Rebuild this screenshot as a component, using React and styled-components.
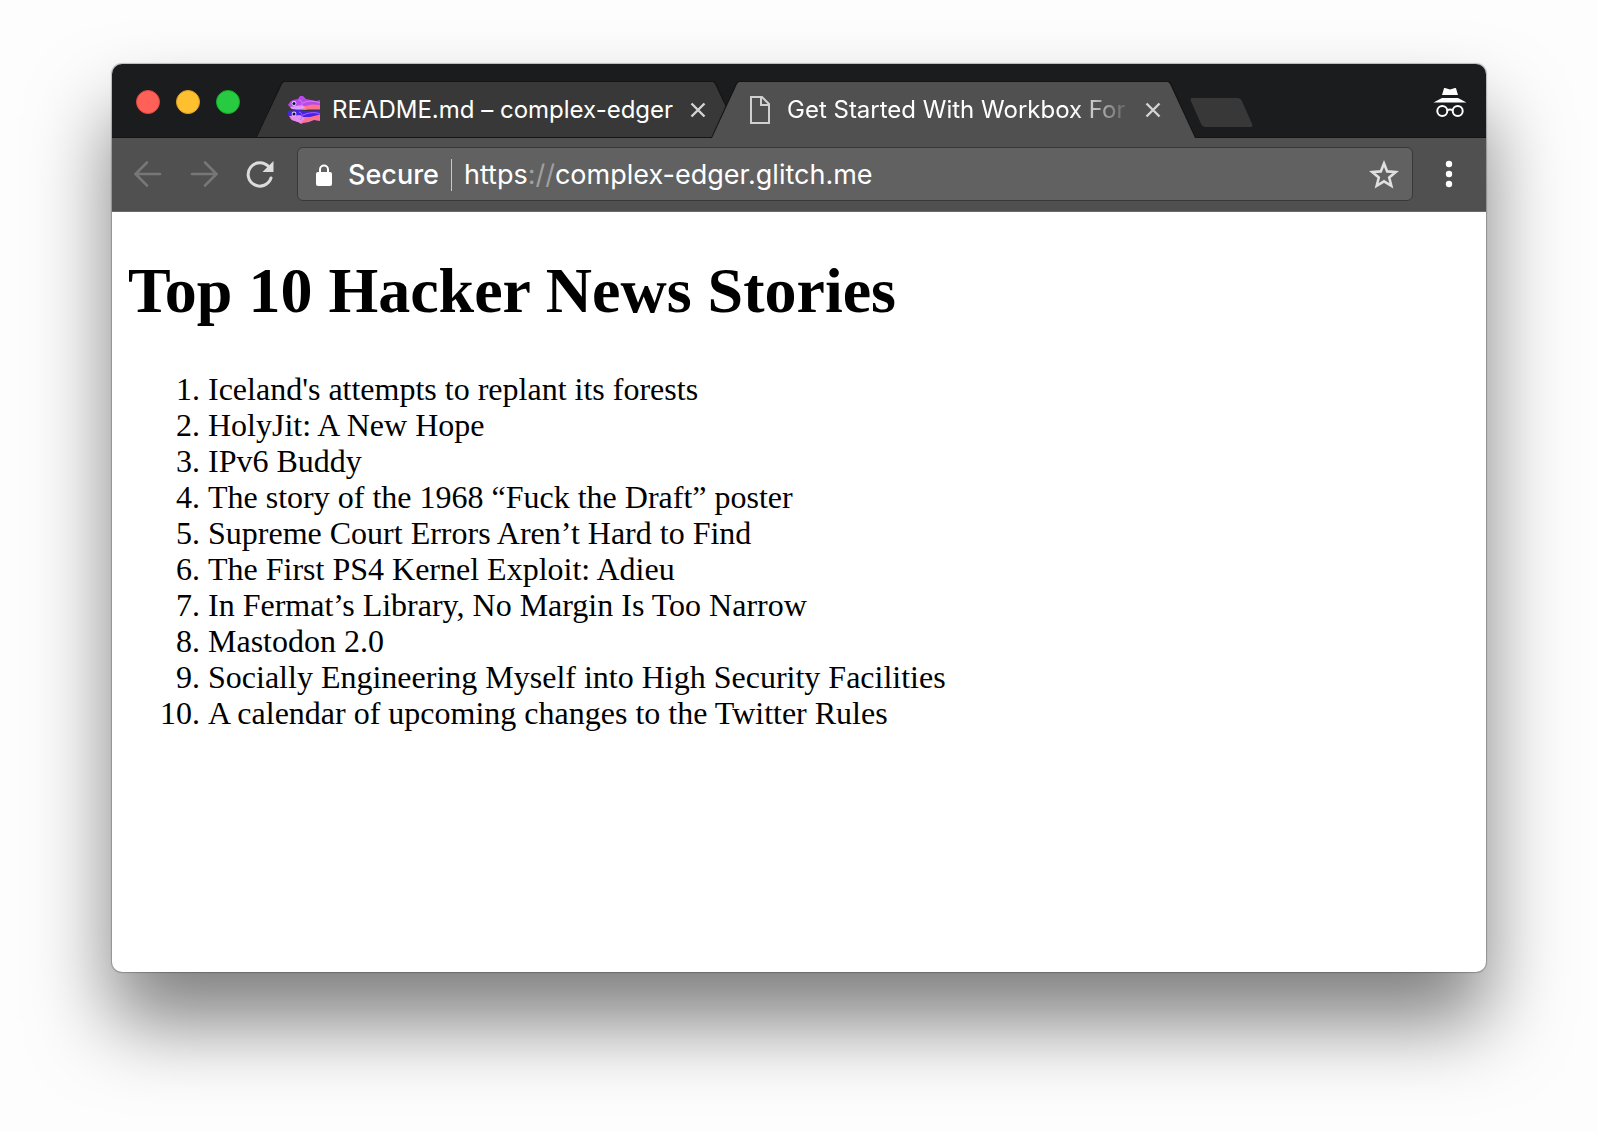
import React from "react";
import styled, { createGlobalStyle, css } from "styled-components";

const uiFont = `Inter, "Liberation Sans", sans-serif`;
const pageFont = `"Liberation Serif", "Times New Roman", serif`;

const GlobalStyle = createGlobalStyle`
  *, *::before, *::after { box-sizing: border-box; }
  body { margin: 0; background: #fdfdfd; }
`;

const Desktop = styled.div`
  display: flex;
  min-height: 100vh;
  padding: 64px 112px 160px;
`;

const BrowserWindow = styled.div`
  flex: 1;
  min-width: 0;
  display: flex;
  flex-direction: column;
  border-radius: 10px;
  background: #fff;
  overflow: hidden;
  box-shadow:
    0 0 1px 1px rgba(0, 0, 0, 0.24),
    0 50px 80px rgba(0, 0, 0, 0.5);
`;

const iconButton = css`
  display: inline-flex;
  align-items: center;
  justify-content: center;
  flex: none;
  padding: 0;
  border: 0;
  background: none;
  color: inherit;
`;

const TitleBar = styled.header`
  display: flex;
  height: 74px;
  padding-left: 24px;
  padding-right: 19px;
  background: #1b1c1d;
  box-shadow: inset 0 -1px #131313;
`;

const TrafficLights = styled.div`
  display: flex;
  gap: 16px;
  padding-top: 26px;
`;

const Light = styled.button`
  ${iconButton}
  width: 24px;
  height: 24px;
  border: 1px solid ${(p) => p.$rim};
  border-radius: 50%;
  background: ${(p) => p.$fill};
`;

const TabStrip = styled.nav`
  display: flex;
  flex: 1;
  min-width: 0;
  padding-left: 16px;
  padding-top: 17px;
`;

const Tab = styled.div`
  position: relative;
  z-index: ${(p) => (p.$active ? 2 : 1)};
  display: flex;
  align-items: center;
  flex: 0 1 485px;
  min-width: 0;
  height: 57px;
  padding-left: 32px;
  padding-right: 35px;
  color: #d4d4d4;

  & + & { margin-left: -30px; }

  &::before, &::after {
    content: "";
    position: absolute;
    z-index: -1;
    inset: 0;
    clip-path: polygon(0 100%, 25px 2px, 27px 0, calc(100% - 27px) 0, calc(100% - 25px) 2px, 100% 100%);
    background: #141414;
  }

  &::after {
    inset: 1px 1px ${(p) => (p.$active ? "0" : "1px")};
    background: ${(p) => (p.$active ? "#505050" : "#383838")};
  }
`;

const TabLink = styled.a`
  display: flex;
  align-items: center;
  flex: 1;
  min-width: 0;
  gap: 12px;
  color: #fff;
  text-decoration: none;
`;

const TabTitle = styled.span`
  flex: 1;
  min-width: 0;
  overflow: hidden;
  white-space: nowrap;
  font: 400 24px/32px ${uiFont};
  ${(p) => p.$fade && css`
    mask-image: linear-gradient(to right, #000 calc(100% - 60px), transparent);
  `}
`;

const CloseButton = styled.button`
  ${iconButton}
  width: 16px;
  height: 16px;
  margin-left: 12px;
`;

const NewTab = styled.button`
  ${iconButton}
  width: 51px;
  height: 29px;
  margin-top: 17px;
  border-radius: 3px;
  background: #383838;
  transform: skewX(24deg);
`;

const Incognito = styled.div`
  display: flex;
  padding-top: 23px;
  color: #fff;
`;

const Toolbar = styled.div`
  display: flex;
  align-items: center;
  height: 74px;
  padding: 0 25px 2px 20px;
  background: #505050;
  box-shadow: inset 0 -1px #6a6a6a;
  color: #dcdcdc;
`;

const NavButtons = styled.div`
  display: flex;
  gap: 24px;
  margin-right: 21px;
`;

const NavButton = styled.button`
  ${iconButton}
  width: 32px;
  height: 32px;
  &:disabled { color: #777; }
`;

const Omnibox = styled.form`
  display: flex;
  align-items: center;
  flex: 1;
  min-width: 0;
  height: 54px;
  margin: 0;
  padding: 1px 12px 0 16px;
  border: 1px solid #383838;
  border-radius: 6px;
  background: #616161;
  color: #fff;
`;

const Security = styled.button`
  ${iconButton}
  gap: 14px;
  font: 500 27px/36px ${uiFont};
`;

const Divider = styled.span`
  width: 1px;
  height: 32px;
  margin: 0 12px;
  background: #c8c8c8;
`;

const Address = styled.a`
  flex: 1;
  min-width: 0;
  overflow: hidden;
  color: #fff;
  font: 400 27px/36px ${uiFont};
  text-decoration: none;
  white-space: nowrap;
`;

const Dim = styled.span`
  color: #a0a0a0;
`;

const StarButton = styled.button`
  ${iconButton}
  color: #e0e0e0;
`;

const MenuButton = styled.button`
  ${iconButton}
  width: 24px;
  height: 32px;
  margin-left: 24px;
  color: #fff;
`;

const Page = styled.main`
  flex: 1;
  padding: 42px 16px;
  color: #000;
  font: 32px/36px ${pageFont};
`;

const Heading = styled.h1`
  margin: 0 0 43px;
  font-size: 64px;
  line-height: 74px;
`;

const Stories = styled.ol`
  margin: 0;
  padding-left: 80px;
`;

const FishIcon = () => (
  <svg width="32" height="30" viewBox="0 0 32 30" aria-hidden="true">
    <path d="M0 10Q2 6 5 5L10 4 12 1 15 1 18 4 23 5 28 6 32 5V14H20L17 15 11 14 4 14Z" fill="#b64be8" />
    <path d="M3 12 17 11 24 9.5 32 10V14.5H20L17 15 10 14.5 4 14Z" fill="#ff7188" />
    <path d="M2 12 14 10 18 13 10 14.5 4 14Z" fill="#d9a0ff" />
    <path d="M11 5C15 6 15 10 12 12M15 8C21 5 27 6 32 8" fill="none" stroke="#e778ff" strokeWidth="1" />
    <path d="M0 20V16L10 15 17 16 32 15.5V26L26 25 21 27 15 28 13 29 10 27 4 25Z" fill="#4a22e5" />
    <path d="M2 23 14 22 22 22 32 19.5V26L26 25 21 27 15 28 13 29 10 27 4 25Z" fill="#ff7188" />
    <path d="M1 21 12 20 17 23 13 28 10 27 4 25Z" fill="#e48cef" />
    <path d="M11 17C15 18 15 22 12 25M15 20C22 17 28 17 32 19" fill="none" stroke="#a56bff" strokeWidth="1" />
    <circle cx="6" cy="8.5" r="2.4" fill="#ded2ff" /><circle cx="6" cy="8.5" r="1.5" fill="#160d38" />
    <circle cx="6" cy="19" r="2.4" fill="#ded2ff" /><circle cx="6" cy="19" r="1.5" fill="#160d38" />
  </svg>
);

const FileIcon = () => (
  <svg width="32" height="30" viewBox="0 0 32 30" fill="none" stroke="#d0d0d0" strokeWidth="2" aria-hidden="true">
    <path d="M8 2H19L26 9V28H8ZM18 2V10H26" />
  </svg>
);

const CloseIcon = () => (
  <svg width="16" height="16" viewBox="0 0 16 16" stroke="currentColor" strokeWidth="2.4" aria-hidden="true">
    <path d="M1.5 1.5 14.5 14.5M14.5 1.5 1.5 14.5" />
  </svg>
);

const IncognitoIcon = () => (
  <svg width="34" height="32" viewBox="0 0 34 32" fill="currentColor" role="img" aria-label="Incognito">
    <path d="M11 1.2Q11.3 .8 12 1L17 2.6 22 1Q22.7 .8 23 1.2L25 8H9ZM9 11H25L33.5 15.5H.5Z" />
    <g fill="none" stroke="currentColor" strokeWidth="2">
      <circle cx="9.3" cy="24" r="5" /><circle cx="24.7" cy="24" r="5" />
      <path d="M14 23.5Q17 21.5 20 23.5" />
    </g>
  </svg>
);

const ArrowIcon = ({ forward }) => (
  <svg width="32" height="32" viewBox="0 0 32 32" fill="none" stroke="currentColor" strokeWidth="2.6" strokeLinecap="round" aria-hidden="true">
    <path d={forward ? "M4 16H28M17 4.5 28.5 16 17 27.5" : "M28 16H4M15 4.5 3.5 16 15 27.5"} />
  </svg>
);

const ReloadIcon = () => (
  <svg width="32" height="32" viewBox="0 0 32 32" aria-hidden="true">
    <path d="M24.7 8.7A11.7 11.7 0 1 0 27 20" fill="none" stroke="currentColor" strokeWidth="3" strokeLinecap="round" />
    <path d="M29.5 3V14H18.5Z" fill="currentColor" />
  </svg>
);

const LockIcon = () => (
  <svg width="20" height="22" viewBox="0 0 20 22" aria-hidden="true">
    <rect x="2" y="8" width="16" height="14" rx="2" fill="currentColor" />
    <path d="M6 9V5.5A4 4 0 0 1 14 5.5V9" fill="none" stroke="currentColor" strokeWidth="2" />
  </svg>
);

const StarIcon = () => (
  <svg width="32" height="32" viewBox="0 0 32 32" fill="none" stroke="currentColor" strokeWidth="2.6" aria-hidden="true">
    <path d="M16 4.5 19.2 12.4 27.7 13 21.2 18.5 23.3 26.8 16 22.3 8.7 26.8 10.8 18.5 4.3 13 12.8 12.4Z" />
  </svg>
);

const DotsIcon = () => (
  <svg width="8" height="28" viewBox="0 0 8 28" fill="currentColor" aria-hidden="true">
    <circle cx="4" cy="4" r="3.2" /><circle cx="4" cy="14" r="3.2" /><circle cx="4" cy="24" r="3.2" />
  </svg>
);

const lights = [
  { name: "Close window", fill: "#ff6057", rim: "#e2463f" },
  { name: "Minimize window", fill: "#ffc02f", rim: "#dfa023" },
  { name: "Zoom window", fill: "#28ca41", rim: "#12ac28" },
];

const tabs = [
  { title: "README.md – complex-edger", Icon: FishIcon },
  { title: "Get Started With Workbox For Webpack", Icon: FileIcon, active: true },
];

const stories = [
  "Iceland's attempts to replant its forests",
  "HolyJit: A New Hope",
  "IPv6 Buddy",
  "The story of the 1968 “Fuck the Draft” poster",
  "Supreme Court Errors Aren’t Hard to Find",
  "The First PS4 Kernel Exploit: Adieu",
  "In Fermat’s Library, No Margin Is Too Narrow",
  "Mastodon 2.0",
  "Socially Engineering Myself into High Security Facilities",
  "A calendar of upcoming changes to the Twitter Rules",
];

export default function App() {
  return (
    <>
      <GlobalStyle />
      <Desktop>
        <BrowserWindow>
          <TitleBar>
            <TrafficLights>
              {lights.map((l) => (
                <Light key={l.name} type="button" aria-label={l.name} $fill={l.fill} $rim={l.rim} />
              ))}
            </TrafficLights>
            <TabStrip aria-label="Tabs">
              {tabs.map(({ title, Icon, active }) => (
                <Tab key={title} $active={active}>
                  <TabLink href="#" aria-current={active ? "page" : undefined}>
                    <Icon />
                    <TabTitle $fade={active}>{title}</TabTitle>
                  </TabLink>
                  <CloseButton type="button" aria-label={`Close ${title}`}><CloseIcon /></CloseButton>
                </Tab>
              ))}
              <NewTab type="button" aria-label="New tab" />
            </TabStrip>
            <Incognito><IncognitoIcon /></Incognito>
          </TitleBar>
          <Toolbar>
            <NavButtons>
              <NavButton type="button" aria-label="Back" disabled><ArrowIcon /></NavButton>
              <NavButton type="button" aria-label="Forward" disabled><ArrowIcon forward /></NavButton>
              <NavButton type="button" aria-label="Reload"><ReloadIcon /></NavButton>
            </NavButtons>
            <Omnibox>
              <Security type="button"><LockIcon />Secure</Security>
              <Divider />
              <Address href="#">https<Dim>://</Dim>complex-edger.glitch.me</Address>
              <StarButton type="button" aria-label="Bookmark this page"><StarIcon /></StarButton>
            </Omnibox>
            <MenuButton type="button" aria-label="Menu"><DotsIcon /></MenuButton>
          </Toolbar>
          <Page>
            <Heading>Top 10 Hacker News Stories</Heading>
            <Stories>
              {stories.map((s) => <li key={s}>{s}</li>)}
            </Stories>
          </Page>
        </BrowserWindow>
      </Desktop>
    </>
  );
}
